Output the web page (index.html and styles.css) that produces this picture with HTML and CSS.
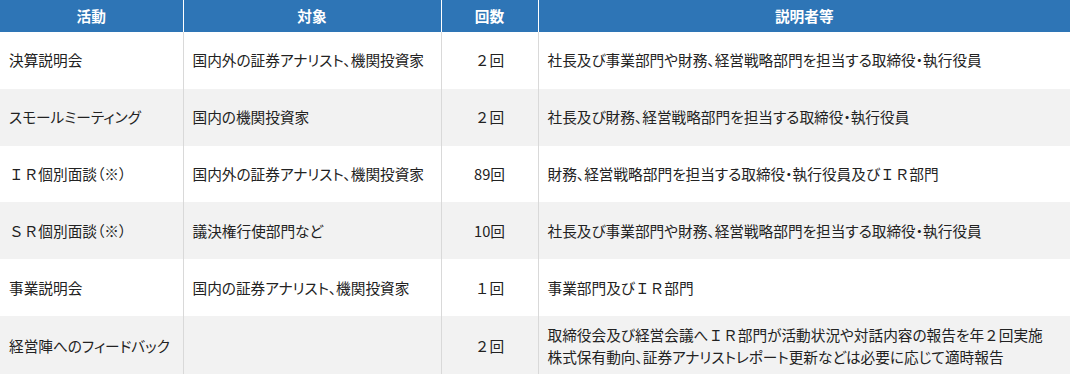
FILE: index.html
```html
<!DOCTYPE html>
<html lang="ja">
<head>
<meta charset="utf-8">
<link rel="stylesheet" href="styles.css">
</head>
<body>
<table class="ir-table">
  <colgroup>
    <col class="c1"><col class="c2"><col class="c3"><col class="c4">
  </colgroup>
  <thead>
    <tr><th>活動</th><th>対象</th><th>回数</th><th>説明者等</th></tr>
  </thead>
  <tbody>
    <tr><td>決算説明会</td><td>国内外の証券アナリスト、機関投資家</td><td class="num"><span class="fw">２</span>回</td><td>社長及び事業部門や財務、経営戦略部門を担当する取締役・執行役員</td></tr>
    <tr class="alt"><td>スモールミーティング</td><td>国内の機関投資家</td><td class="num"><span class="fw">２</span>回</td><td>社長及び財務、経営戦略部門を担当する取締役・執行役員</td></tr>
    <tr><td><span class="fw">ＩＲ</span>個別面談（※）</td><td>国内外の証券アナリスト、機関投資家</td><td class="num">89回</td><td>財務、経営戦略部門を担当する取締役・執行役員及び<span class="fw">ＩＲ</span>部門</td></tr>
    <tr class="alt"><td><span class="fw">ＳＲ</span>個別面談（※）</td><td>議決権行使部門など</td><td class="num">10回</td><td>社長及び事業部門や財務、経営戦略部門を担当する取締役・執行役員</td></tr>
    <tr><td>事業説明会</td><td>国内の証券アナリスト、機関投資家</td><td class="num"><span class="fw">１</span>回</td><td>事業部門及び<span class="fw">ＩＲ</span>部門</td></tr>
    <tr class="alt"><td>経営陣へのフィードバック</td><td></td><td class="num"><span class="fw">２</span>回</td><td>取締役会及び経営会議へ<span class="fw">ＩＲ</span>部門が活動状況や対話内容の報告を年<span class="fw">２</span>回実施<br>株式保有動向、証券アナリストレポート更新などは必要に応じて適時報告</td></tr>
  </tbody>
</table>
</body>
</html>
```
FILE: styles.css
```css
html, body {
  margin: 0;
  padding: 0;
  background: #ffffff;
}
body {
  font-family: "Noto Sans CJK JP", "Noto Sans", sans-serif;
  font-size: 14.67px;
  color: #222222;
}
.ir-table {
  width: 1070px;
  border-collapse: collapse;
  table-layout: fixed;
}
.c1 { width: 183px; }
.c2 { width: 258px; }
.c3 { width: 97px; }
.c4 { width: auto; }
.ir-table th {
  background: #2e75b6;
  color: #ffffff;
  font-weight: bold;
  font-size: 14.67px;
  height: 32px;
  padding: 0;
  line-height: 22px;
  text-align: center;
  border-left: 1px solid #ffffff;
}
.ir-table th:first-child,
.ir-table td:first-child {
  border-left: none;
}
.ir-table td {
  height: 56.8px;
  box-sizing: border-box;
  padding: 8px 8px 8px 9px;
  line-height: 22px;
  vertical-align: middle;
  border-left: 1px solid #d9d9d9;
  white-space: nowrap;
  font-feature-settings: "palt";
}
.ir-table td:first-child {
  padding-left: 9px;
}
.ir-table td.num {
  text-align: center;
  padding-left: 0;
  padding-right: 0;
}
.fw {
  font-feature-settings: normal;
}
.ir-table tr.alt td {
  background: #f2f2f2;
}
```
